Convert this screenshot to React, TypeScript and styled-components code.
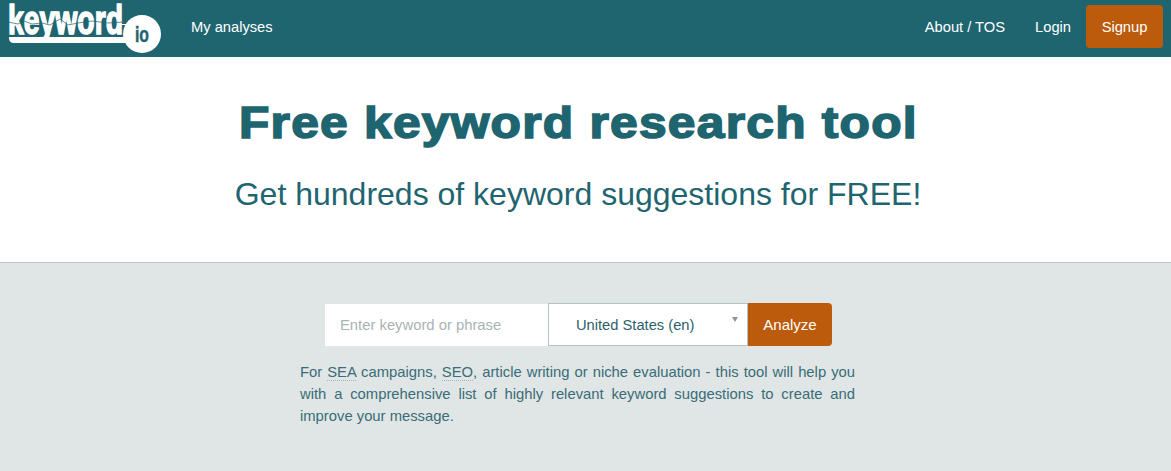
import React from "react"
import styled, { createGlobalStyle } from "styled-components"

const GlobalStyle = createGlobalStyle`
  html, body {
    margin: 0;
    padding: 0;
    background: #e0e6e6;
    font-family: "Liberation Sans", Arial, sans-serif;
    overflow: hidden;
  }
  * { box-sizing: border-box; }
`

const Page = styled.div`
  height: 471px;
  display: flex;
  flex-direction: column;
`

const Navbar = styled.nav`
  height: 57px;
  background: #1f6570;
  display: flex;
  align-items: center;
  padding-right: 8px;
  flex-shrink: 0;
`

const LogoWrap = styled.a`
  display: block;
  width: 162px;
  height: 57px;
  margin-left: 8px;
  flex-shrink: 0;
`

const NavLink = styled.a`
  color: #fff;
  font-size: 14.7px;
  line-height: 20px;
  padding: 0 15px;
  margin-top: -3px;
  text-decoration: none;
`

const LeftLinks = styled.div`
  display: flex;
  margin-left: 6px;
  flex: 1;
`

const SignupButton = styled.a`
  width: 77px;
  height: 43px;
  align-self: flex-start;
  margin-top: 5px;
  background: #bb5b0b;
  color: #fff;
  font-size: 14.7px;
  border-radius: 4px;
  display: flex;
  align-items: center;
  justify-content: center;
`

const Hero = styled.header`
  height: 206px;
  background: #fff;
  border-bottom: 1px solid #b9c6c6;
  padding-right: 15px;
  text-align: center;
  color: #1f6570;
  flex-shrink: 0;
`

const Title = styled.h1`
  margin: 0;
  padding-top: 36px;
  font-size: 44px;
  line-height: 60px;
  font-weight: 700;
  letter-spacing: 1.1px;
  -webkit-text-stroke: 1.6px #1f6570;
`

const TitleText = styled.span`
  display: inline-block;
  transform: scaleX(1.13);
`

const Subtitle = styled.h2`
  margin: 21px 0 0;
  font-size: 32px;
  line-height: 40px;
  font-weight: 400;
`

const Main = styled.main`
  flex: 1;
  background: #e0e6e6;
  display: flex;
  flex-direction: column;
  align-items: center;
  padding: 40px 16px 0 0;
`

const SearchForm = styled.form`
  display: flex;
  height: 43px;
  margin-left: 2px;
`

const KeywordInput = styled.input`
  width: 223px;
  height: 42px;
  margin-top: 1px;
  border: 0;
  background: #fff;
  padding: 0 15px;
  font: 14.8px "Liberation Sans", Arial, sans-serif;
  color: #1f6570;
  &::placeholder {
    color: #a9b3b6;
    opacity: 1;
  }
`

const CountrySelect = styled.div`
  position: relative;
  width: 200px;
  height: 43px;
  background: #fff;
  border: 1px solid #b4c2c4;
  padding-left: 27px;
  display: flex;
  align-items: center;
  font-size: 14.7px;
  color: #2c5f6b;
`

const Caret = styled.span`
  position: absolute;
  top: 13px;
  right: 9px;
  width: 0;
  height: 0;
  border-left: 3px solid transparent;
  border-right: 3px solid transparent;
  border-top: 5px solid #8a9699;
`

const AnalyzeButton = styled.button`
  width: 84px;
  height: 43px;
  border: 0;
  border-radius: 0 4px 4px 0;
  background: #bb5b0b;
  color: #fff;
  font: 15px "Liberation Sans", Arial, sans-serif;
  padding: 0;
`

const Description = styled.p`
  width: 555px;
  margin: 15px 0 0;
  font-size: 14.8px;
  line-height: 22px;
  color: #3a6c77;
  text-align: justify;
`

const Abbr = styled.abbr`
  text-decoration: none;
  border-bottom: 1px dotted #a5b6ba;
`

const Logo = () => (
  <svg width="162" height="57" viewBox="0 0 162 57">
    <text x="0" y="34" fill="#fff" fontFamily="Liberation Sans" fontWeight="700" fontSize="41" textLength="115" lengthAdjust="spacingAndGlyphs" stroke="#fff" strokeWidth="1.6">keyword</text>
    <path d="M0 22 L10 24 L16 21 L24 24 L34 23 L42 25 L52 19 L60 25 L70 23 L84 21 L100 23 L115 22" fill="none" stroke="#1f6570" strokeWidth="0.7" />
    <path d="M1 37 H126 V43 H6 Q1 43 1 38 Z" fill="#fff" />
    <path d="M113 24 H120 V25 H113 Z" fill="#fff" />
    <circle cx="134" cy="34" r="19" fill="#fff" />
    <text x="127" y="42" fill="#1f6570" fontFamily="Liberation Sans" fontWeight="700" fontSize="22" textLength="14" lengthAdjust="spacingAndGlyphs" stroke="#1f6570" strokeWidth="0.5">io</text>
  </svg>
)

const App = () => {
  return (
    <Page>
      <GlobalStyle />
      <Navbar>
        <LogoWrap><Logo /></LogoWrap>
        <LeftLinks>
          <NavLink>My analyses</NavLink>
        </LeftLinks>
        <NavLink>About / TOS</NavLink>
        <NavLink>Login</NavLink>
        <SignupButton>Signup</SignupButton>
      </Navbar>

      <Hero>
        <Title><TitleText>Free keyword research tool</TitleText></Title>
        <Subtitle>Get hundreds of keyword suggestions for FREE!</Subtitle>
      </Hero>

      <Main>
        <SearchForm>
          <KeywordInput placeholder="Enter keyword or phrase" />
          <CountrySelect>
            United States (en)
            <Caret />
          </CountrySelect>
          <AnalyzeButton type="button">Analyze</AnalyzeButton>
        </SearchForm>
        <Description>
          For <Abbr>SEA</Abbr> campaigns, <Abbr>SEO</Abbr>, article writing or niche evaluation - this tool will help you with a comprehensive list of highly relevant keyword suggestions to create and improve your message.
        </Description>
      </Main>
    </Page>
  )
}

export default App
